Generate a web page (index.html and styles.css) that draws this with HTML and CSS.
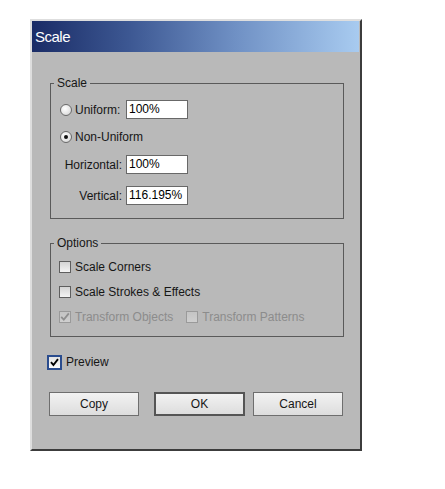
FILE: index.html
```html
<!DOCTYPE html>
<html>
<head>
<meta charset="utf-8">
<link rel="stylesheet" href="styles.css">
</head>
<body>
<div class="dialog">
  <div class="titlebar">Scale</div>
  <div class="content">
    <fieldset class="group group-scale">
      <legend>Scale</legend>
      <div class="row row-uniform">
        <span class="lead"><span class="radio"></span>Uniform:</span>
        <span class="field">100%</span>
      </div>
      <div class="row row-nonuniform">
        <span class="lead lead-auto"><span class="radio radio-on"><span class="dot"></span></span>Non-Uniform</span>
      </div>
      <div class="row row-horizontal">
        <span class="lead lead-right">Horizontal:</span>
        <span class="field">100%</span>
      </div>
      <div class="row row-vertical">
        <span class="lead lead-right">Vertical:</span>
        <span class="field">116.195%</span>
      </div>
    </fieldset>

    <fieldset class="group group-options">
      <legend>Options</legend>
      <div class="crow">
        <span class="check"></span>Scale Corners
      </div>
      <div class="crow crow-gap">
        <span class="check"></span>Scale Strokes &amp; Effects
      </div>
      <div class="crow crow-gap disabled">
        <span class="check check-dis"><svg viewBox="0 0 12 12" width="12" height="12"><path d="M2.2 5.8 L4.8 8.6 L9.8 2.4" fill="none" stroke="#8f8f8f" stroke-width="1.8"/></svg></span>Transform Objects
        <span class="check check-dis second"></span>Transform Patterns
      </div>
    </fieldset>

    <div class="preview">
      <span class="check check-preview"><svg viewBox="0 0 13 13" width="13" height="13"><path d="M2.3 6.2 L5.2 9.4 L10.6 2.6" fill="none" stroke="#000" stroke-width="2.2"/></svg></span>Preview
    </div>

    <div class="buttons">
      <button class="btn btn-copy">Copy</button>
      <button class="btn btn-ok">OK</button>
      <button class="btn btn-cancel">Cancel</button>
    </div>
  </div>
</div>
</body>
</html>
```

FILE: styles.css
```css
html, body {
  margin: 0;
  padding: 0;
  background: #ffffff;
}

.dialog {
  box-sizing: border-box;
  margin: 19px 0 0 30px;
  width: 332px;
  height: 432px;
  background: #b9b9b9;
  border-top: 2px solid #dedede;
  border-left: 2px solid #dedede;
  border-right: 2px solid #3c3c3c;
  border-bottom: 2px solid #3c3c3c;
  font-family: "Liberation Sans", Arial, sans-serif;
  font-size: 12px;
  color: #161616;
}

.titlebar {
  height: 31px;
  line-height: 31px;
  padding-left: 3px;
  margin-right: 1px;
  background: linear-gradient(to right, #1a2c66 0%, #3d5893 30%, #6f90c4 62%, #a8cbf0 100%);
  color: #ffffff;
  font-size: 15px;
  letter-spacing: -0.5px;
}

.content {
  padding: 0 16px 0 15px;
}

.group {
  margin: 0 0 0 3px;
  border: 1px solid #5a5a5a;
  min-width: 0;
}

.group legend {
  padding: 0 3px;
  font-size: 12px;
  line-height: 14px;
}

.group-scale {
  margin-top: 24px;
  padding: 10px 0 13px 9px;
}

.group-scale legend {
  margin-left: -6px;
}

.group-options {
  margin-top: 17px;
  padding: 9px 0 11px 8px;
}

.group-options legend {
  margin-left: -5px;
}

.row {
  display: flex;
  align-items: center;
  height: 19px;
}

.row-nonuniform { margin-top: 8px; }
.row-horizontal { margin-top: 9px; }
.row-vertical { margin-top: 12px; }

.lead {
  display: flex;
  align-items: center;
  width: 66px;
  white-space: nowrap;
  flex: none;
}

.lead-auto {
  width: auto;
}

.lead-right {
  justify-content: flex-end;
  box-sizing: border-box;
  padding-right: 4px;
}

.radio {
  box-sizing: border-box;
  width: 12px;
  height: 12px;
  margin-right: 3px;
  border: 1px solid #6a6a6a;
  border-radius: 50%;
  background: radial-gradient(circle at 40% 35%, #ffffff 0%, #e6e6e6 55%, #c9c9c9 100%);
  display: flex;
  align-items: center;
  justify-content: center;
  flex: none;
}

.dot {
  width: 4px;
  height: 4px;
  border-radius: 50%;
  background: #111;
}

.field {
  box-sizing: border-box;
  width: 62px;
  height: 19px;
  border: 1px solid #686868;
  background: #ffffff;
  padding-left: 2px;
  line-height: 17px;
  font-size: 12px;
  color: #000;
  white-space: nowrap;
  overflow: hidden;
  flex: none;
}

.crow {
  display: flex;
  align-items: center;
  height: 16px;
  white-space: nowrap;
}

.crow-gap {
  margin-top: 9px;
}

.disabled {
  color: #8c8c8c;
}

.check {
  box-sizing: border-box;
  width: 12px;
  height: 12px;
  margin-right: 4px;
  border: 1px solid #5e5e5e;
  background: linear-gradient(to bottom, #d4d4d4, #f4f4f4);
  display: flex;
  align-items: center;
  justify-content: center;
  flex: none;
}

.check svg {
  display: block;
  flex: none;
}

.check-dis {
  border-color: #9a9a9a;
  background: linear-gradient(to bottom, #c4c4c4, #cfcfcf);
}

.second {
  margin-left: 13px;
}

.preview {
  display: flex;
  align-items: center;
  height: 16px;
  margin-top: 17px;
}

.check-preview {
  width: 15px;
  height: 15px;
  border: 2px solid #2a4c8e;
  background: linear-gradient(to bottom, #e4e4e4, #fafafa);
}

.check-preview svg {
  width: 11px;
  height: 11px;
}

.buttons {
  display: flex;
  margin-top: 22px;
  margin-left: 2px;
}

.btn {
  box-sizing: border-box;
  height: 24px;
  padding: 0;
  border: 1px solid #6e6e6e;
  border-radius: 0;
  background: linear-gradient(to bottom, #f2f2f2, #dddddd);
  font-family: "Liberation Sans", Arial, sans-serif;
  font-size: 12px;
  color: #161616;
}

.btn-copy {
  width: 90px;
}

.btn-ok {
  width: 91px;
  margin-left: 15px;
  border: 2px solid #555555;
}

.btn-cancel {
  width: 90px;
  margin-left: 8px;
}
```
